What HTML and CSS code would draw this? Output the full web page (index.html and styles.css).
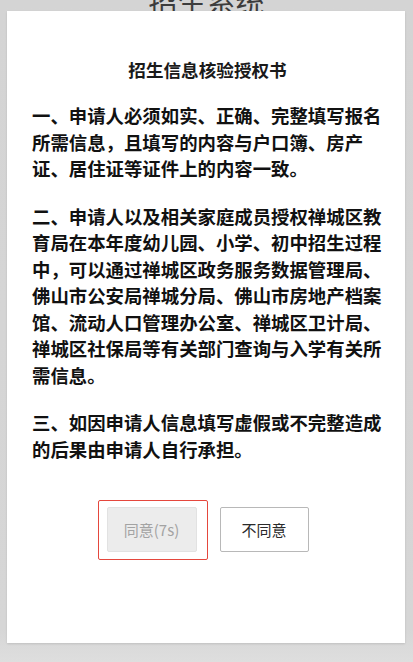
FILE: index.html
```html
<!DOCTYPE html>
<html lang="zh-CN">
<head>
<meta charset="utf-8">
<title>招生信息核验授权书</title>
<link rel="stylesheet" href="styles.css">
</head>
<body>
<div class="page-head"><span class="page-title">招生系统</span></div>
<div class="panel">
  <h1 class="doc-title">招生信息核验授权书</h1>
  <p class="clause">一、申请人必须如实、正确、完整填写报名所需信息，且填写的内容与户口簿、房产证、居住证等证件上的内容一致。</p>
  <p class="clause">二、申请人以及相关家庭成员授权禅城区教育局在本年度幼儿园、小学、初中招生过程中，可以通过禅城区政务服务数据管理局、佛山市公安局禅城分局、佛山市房地产档案馆、流动人口管理办公室、禅城区卫计局、禅城区社保局等有关部门查询与入学有关所需信息。</p>
  <p class="clause">三、如因申请人信息填写虚假或不完整造成的后果由申请人自行承担。</p>
  <div class="actions">
    <span class="agree-wrap">
      <button class="btn btn-agree" disabled>同意(7s)</button>
      <span class="highlight"></span>
    </span>
    <button class="btn btn-decline">不同意</button>
  </div>
</div>
</body>
</html>
```

FILE: styles.css
```css
html, body {
  margin: 0;
  padding: 0;
}
body {
  width: 413px;
  height: 662px;
  overflow: hidden;
  background: linear-gradient(to bottom, #d4d4d4 0%, #d6d6d6 95%, #dedede 100%);
  font-family: "Noto Sans CJK SC", "Noto Sans", sans-serif;
}
.page-head {
  height: 11px;
  overflow: hidden;
  display: flex;
  justify-content: center;
  align-items: flex-end;
}
.page-title {
  display: block;
  font-size: 29px;
  line-height: 29px;
  color: #3c3c3c;
  margin-bottom: -5px;
}
.panel {
  margin: 0 8px 0 7px;
  height: 632px;
  box-sizing: border-box;
  background: #fff;
  padding: 47px 22px 0 25px;
  box-shadow: 0 1px 2px rgba(0,0,0,0.12);
}
.doc-title {
  margin: 0 0 20px;
  text-align: center;
  font-size: 17.6px;
  line-height: 24px;
  font-weight: 700;
  color: #1a1a1a;
}
.clause {
  margin: 0 0 21px;
  font-size: 18.4px;
  line-height: 26.5px;
  font-weight: 700;
  color: #111;
}
.clause:last-of-type {
  margin-bottom: 0;
}
.actions {
  margin-top: 45px;
  display: flex;
  justify-content: center;
  gap: 23px;
}
.agree-wrap {
  position: relative;
  display: flex;
}
.btn {
  box-sizing: border-box;
  height: 45px;
  padding: 0;
  border-radius: 2px;
  font-family: "Noto Sans CJK SC", "Noto Sans", sans-serif;
  font-size: 15px;
}
.btn-agree {
  width: 90px;
  background: #ececec;
  border: 1px solid #e2e2e2;
  color: #a3a3a3;
}
.btn-decline {
  width: 89px;
  background: #fff;
  border: 1px solid #b8b8b8;
  color: #2a2a2a;
}
.highlight {
  position: absolute;
  top: -7px;
  left: -9px;
  right: -11px;
  bottom: -8px;
  border: 1.5px solid #e5473d;
  border-radius: 2px;
}
```
